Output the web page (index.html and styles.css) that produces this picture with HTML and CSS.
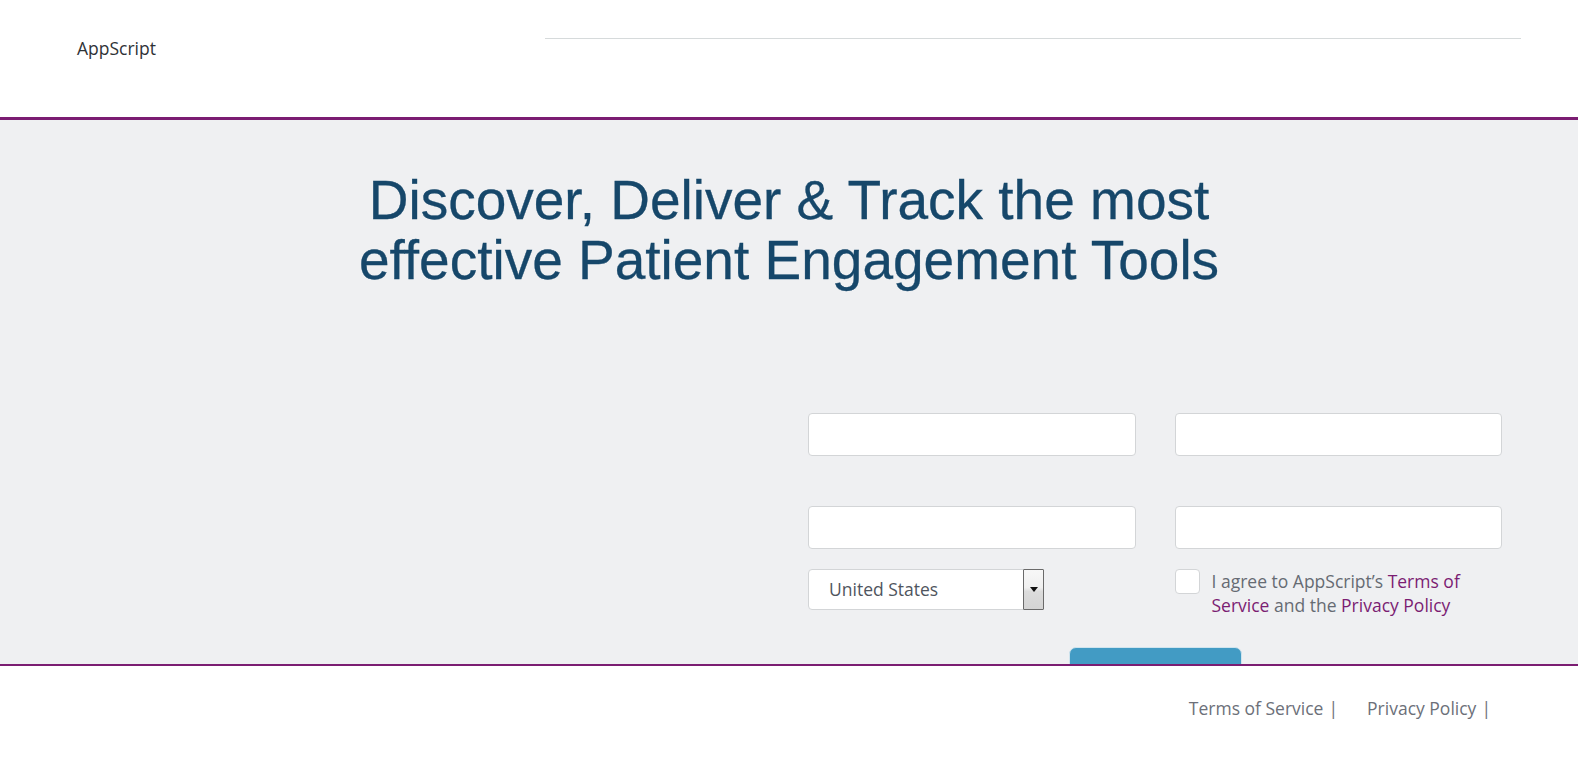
FILE: index.html
```html
<!DOCTYPE html>
<html lang="en">
<head>
<meta charset="utf-8">
<title>AppScript</title>
<link rel="stylesheet" href="styles.css">
</head>
<body>
<header class="site-header">
  <div class="brand">AppScript</div>
  <div class="header-rule"></div>
</header>
<main class="hero">
  <h1 class="hero-title">Discover, Deliver &amp; Track the most<br>effective Patient Engagement Tools</h1>
  <div class="signup-row">
    <form class="signup">
      <input class="field" type="text" aria-label="First name">
      <input class="field" type="text" aria-label="Last name">
      <input class="field field-lower" type="email" aria-label="Email">
      <input class="field field-lower" type="text" aria-label="Organization">
      <div class="select">
        <span class="select-value">United States</span>
        <span class="select-arrow"><span class="tri"></span></span>
      </div>
      <label class="agree">
        <span class="checkbox"></span>
        <span class="agree-text">I agree to AppScript’s <a href="#">Terms of Service</a> and the <a href="#">Privacy Policy</a></span>
      </label>
      <div class="submit-wrap"><button type="button" class="submit"></button></div>
    </form>
  </div>
</main>
<footer class="site-footer">
  <nav class="footer-links">
    <a href="#">Terms of Service</a><span class="sep">|</span>
    <a href="#">Privacy Policy</a><span class="sep">|</span>
  </nav>
</footer>
</body>
</html>
```
FILE: styles.css
```css
* { box-sizing: border-box; }
html, body { height: 100%; }
body {
  margin: 0;
  font-family: "Open Sans", "Noto Sans", sans-serif;
  background: #fff;
  display: flex;
  flex-direction: column;
  overflow: hidden;
}
.site-header {
  height: 120px;
  flex: none;
  border-bottom: 3px solid #7b1d72;
  display: flex;
  align-items: flex-start;
  padding-left: 77px;
}
.brand {
  font-size: 17.5px;
  color: #2f3236;
  margin-top: 36px;
  line-height: 24px;
  width: 468px;
}
.header-rule {
  margin-top: 38px;
  height: 1px;
  width: 976px;
  background: #d6dadb;
}
.hero {
  flex: 1;
  background: #eff0f2;
  overflow: hidden;
  min-height: 0;
}
.hero-title {
  margin: 50px 0 0;
  text-align: center;
  font-family: "Liberation Sans", Arial, sans-serif;
  font-weight: 400;
  font-size: 55px;
  line-height: 60px;
  color: #16476a;
  -webkit-text-stroke: 0.3px #16476a;
}
.signup-row {
  display: flex;
  justify-content: flex-end;
  padding-right: 76px;
  margin-top: 123px;
}
.signup {
  width: 694px;
  display: grid;
  grid-template-columns: 1fr 1fr;
  column-gap: 39px;
  align-items: start;
}
.field {
  height: 43px;
  border: 1px solid #d3d5d7;
  border-radius: 4px;
  background: #fff;
  font: inherit;
  margin: 0;
}
.field-lower { margin-top: 50px; }
.select {
  margin-top: 20px;
  width: 236px;
  height: 41px;
  background: #fff;
  border: 1px solid #d3d5d7;
  border-radius: 4px;
  display: flex;
  align-items: stretch;
}
.select-value {
  flex: 1;
  padding-left: 20px;
  font-size: 17.5px;
  line-height: 39px;
  color: #4f555e;
}
.select-arrow {
  width: 21px;
  margin: -1px -1px -1px 0;
  border: 1px solid #6a6a6a;
  border-radius: 1px;
  background: linear-gradient(#f7f7f7 0%, #f0f0f0 45%, #dcdcdc 55%, #d4d4d4 100%);
  display: flex;
  justify-content: center;
  padding-top: 17px;
}
.tri {
  width: 0;
  height: 0;
  border-left: 4px solid transparent;
  border-right: 4px solid transparent;
  border-top: 5px solid #111;
}
.agree {
  margin-top: 20px;
  display: flex;
  align-items: flex-start;
  gap: 12px;
}
.checkbox {
  flex: none;
  width: 25px;
  height: 25px;
  background: #fff;
  border: 1px solid #d3d5d7;
  border-radius: 4px;
}
.agree-text {
  font-size: 17.5px;
  line-height: 24px;
  color: #666b73;
  width: 275px;
}
.agree-text a { color: #7b1d72; text-decoration: none; }
.submit-wrap {
  grid-column: 1 / 3;
  display: flex;
  justify-content: center;
  margin-top: 30px;
}
.submit {
  width: 173px;
  height: 46px;
  border: 1px solid #cfe4ee;
  border-radius: 7px;
  background: #429bc4;
}
.site-footer {
  flex: none;
  height: 99px;
  border-top: 2px solid #7b1d72;
  display: flex;
  justify-content: flex-end;
  padding: 30px 87px 0 0;
}
.footer-links {
  display: flex;
  align-items: flex-start;
  font-size: 17.5px;
  line-height: 24px;
}
.footer-links a { color: #6c7079; text-decoration: none; }
.sep { color: #6c7079; margin: 0 29px 0 5px; }
.sep:last-child { margin-right: 0; }
```
